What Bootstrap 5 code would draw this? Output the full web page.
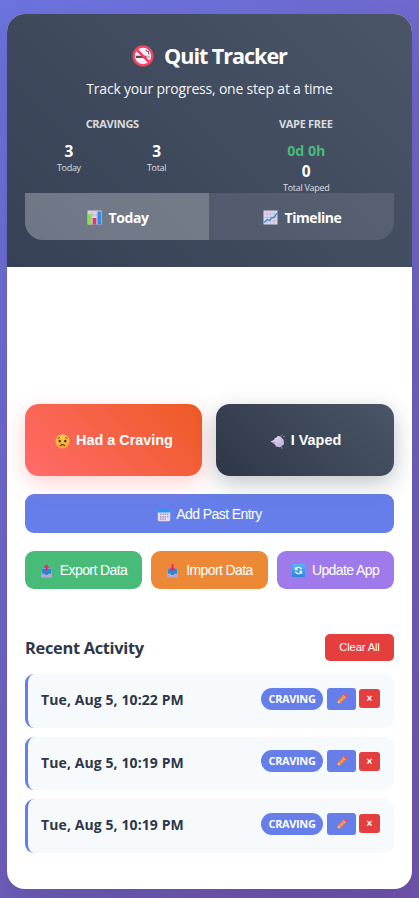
<!DOCTYPE html>
<html lang="en">
<head>
<meta charset="utf-8">
<meta name="viewport" content="width=device-width, initial-scale=1">
<title>Quit Tracker</title>
<link href="https://cdn.jsdelivr.net/npm/bootstrap@5.3.0/dist/css/bootstrap.min.css" rel="stylesheet">
<style>
body{font-family:"Open Sans","Noto Sans",sans-serif;background:linear-gradient(135deg,#6c73de 0%,#7053ac 100%);height:898px;padding:14px 7px 9px;overflow:hidden}
.app{height:875px;border-radius:18px;background:#fff;box-shadow:0 18px 36px rgba(0,0,0,.1)}
.hero{height:253px;padding:27px 18px;background:linear-gradient(45deg,#364155,#4a5568)}
.title{font-size:21.6px;line-height:29px;font-weight:700;letter-spacing:-1.05px;gap:10px;margin:0 0 9px}
.sub{font-size:14px;line-height:20px;letter-spacing:-.2px;margin:0 0 16px;opacity:.95}
.stats{height:78px;gap:18px}
.cap{font-size:11px;line-height:18px;font-weight:700;letter-spacing:-.3px;opacity:.8;margin:0 1px 8px 0}
.num{font-size:15.5px;line-height:20px;font-weight:700}
.free{font-size:14.2px;color:#48bb78}
.lab{font-size:9px;line-height:12px;letter-spacing:-.3px;opacity:.8;padding-top:1px}
.tabs{height:47px;border-radius:0 0 18px 18px;background:rgba(255,255,255,.1)}
.tab-item{gap:7px;font-size:14px;font-weight:700;letter-spacing:-.45px;color:#fff;border:0;background:none;padding:2px 0 0 1px;flex:1 0 0}
.tab-item.on{background:rgba(255,255,255,.2);flex:0 0 184px}
.main-area{padding:137px 18px 0}
.main-area button{font-family:"Liberation Sans",Arial,sans-serif;color:#fff;border:0;padding:0}
.main-area .big{height:72px;border-radius:14px;font-size:14.4px;font-weight:700;letter-spacing:0;gap:6px;padding:2px 0 0 1px}
.crave{flex:0 0 177px;background:linear-gradient(45deg,#ff6b6b,#ee5a24);box-shadow:0 7px 22px rgba(255,107,107,.3)}
.vape{flex:1 0 0;background:linear-gradient(45deg,#2d3748,#4a5568);box-shadow:0 7px 22px rgba(45,55,72,.3)}
.main-area .wide{height:39px;border-radius:9px;background:#667eea;font-size:14px;letter-spacing:-.58px;gap:5px;margin:18px 0;padding-top:2px}
.main-area .tool{height:38px;border-radius:9px;font-size:14px;letter-spacing:-.6px;gap:7px;padding-top:1px;flex:1 0 0}
.green{background:#48bb78}.orange{background:#ed8936}.purple{background:#9f7aea}
.recent{margin:45px 0 13px;height:27px}
.recent h2{font-size:16.4px;font-weight:700;color:#2d3748;margin:0;letter-spacing:-.3px}
.main-area .clear{width:69px;height:27px;border-radius:5px;background:#e53e3e;font-size:11.2px;letter-spacing:-.15px}
.entries{gap:9px}
.entry{height:53.6px;border-left:3px solid #667eea;border-radius:9px;background:#f7fafc;padding:0 14px 4px 13px}
.when{font-size:14px;font-weight:700;letter-spacing:.1px;color:#2d3748;padding-top:2px}
.tag{width:62px;height:22px;border-radius:11px;background:#667eea;color:#fff;font-size:10.9px;font-weight:700;letter-spacing:-.3px;margin-right:4px}
.main-area .edit{width:29px;height:22px;border-radius:3px;background:#667eea;margin-right:3px}
.main-area .del{width:21px;height:19px;border-radius:3px;background:#e53e3e;font-size:10px;font-weight:700;line-height:20px}
svg{flex:none;display:block}
</style>
</head>
<body>
<svg width="0" height="0" class="position-absolute">
<defs>
<linearGradient id="gy" x2="0" y2="1"><stop stop-color="#ffd23f"/><stop offset="1" stop-color="#f2a13a"/></linearGradient>
<linearGradient id="gb" x2="0" y2="1"><stop stop-color="#58b5f7"/><stop offset="1" stop-color="#2b86dc"/></linearGradient>
<linearGradient id="gc" x2="1" y2="1"><stop stop-color="#eee5f6"/><stop offset="1" stop-color="#b9a4da"/></linearGradient>
<symbol id="tray" viewBox="0 0 12 13"><path d="M2 3h8l1.500 6v3.200H.5V9z" fill="#c9badf"/><path d="M1.800 3.500h8.400l.7 5.300H8.200L7.300 10H4.700l-.9-1.200H1.100z" fill="#2389d8"/><path d="M.5 9h3l1 1.400h3L8.500 9h3v3.300H.5z" fill="#b6a4d2"/></symbol>
<symbol id="pen" viewBox="0 0 12 12"><path d="M2 7.300 7.300 2l2.700 2.700L4.700 10z" fill="#f98035"/><path d="m2.900 8.200 5.300-5.300.9.900-5.300 5.300z" fill="#ffa052"/><path d="m7.300 2 .9-.9q1-.9 2 0l.7.700q.9 1 0 2l-.9.900z" fill="#f34f62"/><path d="m6.700 2.600.6-.6L10 4.700l-.6.600z" fill="#c4b6c9"/><path d="M2 7.300.8 11.200 4.700 10z" fill="#e9b294"/><path d="m1.200 9.900-.4 1.300 1.300-.4z" fill="#40334e"/></symbol>
</defs>
</svg>
<main class="app overflow-hidden">
<header class="hero text-white text-center">
<h1 class="title d-flex justify-content-center align-items-center">
<svg width="22" height="22" viewBox="0 0 22 22"><circle cx="11" cy="11" r="9.300" fill="#f7effb"/><path d="M4 10.800h10.500V13H4z" fill="#59485e"/><path d="M14.500 10.800H18V13h-3.500z" fill="#d6b5bd"/><path d="M16.800 9.500V7.800q0-1.400-1.500-1.500-1.300-.1-1.300-1.500" fill="none" stroke="#5d5262" stroke-width="1.100"/><circle cx="11" cy="11" r="9.400" fill="none" stroke="#f44360" stroke-width="2.500"/><path d="m4.500 4.500 13 13" stroke="#f44360" stroke-width="2.500"/></svg>
<span>Quit Tracker</span></h1>
<p class="sub">Track your progress, one step at a time</p>
<section class="stats d-flex">
<div class="flex-fill w-50"><div class="cap">CRAVINGS</div><div class="d-flex"><div class="w-50"><div class="num">3</div><div class="lab">Today</div></div><div class="w-50"><div class="num">3</div><div class="lab">Total</div></div></div></div>
<div class="flex-fill w-50"><div class="cap">VAPE FREE</div><div class="num free">0d 0h</div><div class="num">0</div><div class="lab">Total Vaped</div></div>
</section>
<nav class="tabs d-flex overflow-hidden">
<button class="tab-item on d-flex justify-content-center align-items-center"><svg width="15" height="15" viewBox="0 0 15 15"><path d="M.5.5h14v14H.5z" fill="#dcd2e7"/><path d="M.5 5h14M.5 9.500h14M5 .5v14M10 .5v14" stroke="#bcafc9" stroke-width=".6"/><path d="M1 4h3.500v10.500H1z" fill="#8bdc58"/><path d="M5.700 8h3.600v6.500H5.700z" fill="#e43468"/><path d="M10.500 1.500H14v13h-3.500z" fill="#2e8de5"/></svg><span>Today</span></button>
<button class="tab-item d-flex justify-content-center align-items-center"><svg width="15" height="15" viewBox="0 0 15 15"><path d="M.5.5h14v14H.5z" fill="#dfd5e9"/><path d="M.5 4h14M.5 7.500h14M.5 11h14M4 .5v14M7.500 .5v14M11 .5v14" stroke="#bcb0cb" stroke-width=".6"/><path d="m1 12.500 3.500-3 2 1L9 7.500h2L14.300 3" fill="none" stroke="#2d91d3" stroke-width="1.300"/></svg><span>Timeline</span></button>
</nav>
</header>
<div class="main-area">
<div class="d-flex" style="gap:14px">
<button class="big crave d-flex justify-content-center align-items-center"><svg width="15" height="15" viewBox="0 0 15 15"><circle cx="7.500" cy="7.500" r="7" fill="url(#gy)"/><path d="M2.500 4.600 5 3.200m5 0 2.500 1.400" stroke="#79482d" fill="none"/><ellipse cx="4.700" cy="7.100" rx="1.200" ry="1.300" fill="#493446"/><ellipse cx="10.300" cy="7.100" rx="1.200" ry="1.300" fill="#493446"/><path d="M5 11.800q2.500-2.300 5 0" stroke="#6c3b37" stroke-width="1.100" fill="none"/></svg><span>Had a Craving</span></button>
<button class="big vape d-flex justify-content-center align-items-center"><svg width="15" height="15" viewBox="0 0 15 15"><path d="M.3 7.500 4 6q.2-2.300 2.500-2.600 1-2 3-1.200 2 .2 2.200 1.800 2.500 1 2.100 3.500 1 3-1.500 4-1.300 2.500-3.500 1.500-3 .4-3.600-2L3.500 9z" fill="url(#gc)"/><path d="m3 8 3-.6-2 2zM11.500 1.500l1-.8m1 2 1-.3M11.500 13.800l1 .3" stroke="#ddd0ec" stroke-width=".9"/></svg><span>I Vaped</span></button>
</div>
<button class="wide w-100 d-flex justify-content-center align-items-center"><svg width="14" height="14" viewBox="0 0 14 14"><rect x=".8" y="1" width="12.400" height="12.200" rx="1.500" fill="#e6dcf2"/><path d="M.5 4.500V2q0-1.300 1.300-1.300h10.400q1.300 0 1.300 1.300v2.500z" fill="#2799eb"/><path d="M3 6.300h8.500M3 8.700h8.500M3 11h6" stroke="#a896bf" stroke-width="1.500" stroke-dasharray="1.500 .8"/></svg><span>Add Past Entry</span></button>
<div class="d-flex" style="gap:9px">
<button class="tool green d-flex justify-content-center align-items-center"><svg width="13" height="14" viewBox="0 0 13 14"><use href="#tray" y="1" width="13" height="13"/><path d="M6.500.3 3.700 3.800h1.800v3h2v-3h1.800z" fill="#e8265e"/></svg><span>Export Data</span></button>
<button class="tool orange d-flex justify-content-center align-items-center"><svg width="13" height="14" viewBox="0 0 13 14"><use href="#tray" y="1" width="13" height="13"/><path d="M5.500.3h2v4h1.800L6.500 7.700 3.700 4.300h1.800z" fill="#e8265e"/></svg><span>Import Data</span></button>
<button class="tool purple d-flex justify-content-center align-items-center"><svg width="13" height="13" viewBox="0 0 13 13"><rect width="13" height="13" rx="1" fill="url(#gb)"/><path d="M9.600 5.200A3.400 3.400 0 0 0 4 4.500M3.400 7.800A3.400 3.400 0 0 0 9 8.500" fill="none" stroke="#fff" stroke-width="1.400"/><path d="M2.800 2.800v3.400h3.400zM10.200 10.200V6.800H6.800z" fill="#fff"/></svg><span>Update App</span></button>
</div>
<div class="recent d-flex justify-content-between align-items-center"><h2>Recent Activity</h2><button class="clear">Clear All</button></div>
<div class="entries d-flex flex-column">
<article class="entry d-flex align-items-center"><span class="when me-auto">Tue, Aug 5, 10:22 PM</span><span class="tag d-flex justify-content-center align-items-center">CRAVING</span><button class="edit d-flex justify-content-center align-items-center" aria-label="Edit"><svg width="12" height="12"><use href="#pen"/></svg></button><button class="del">×</button></article>
<article class="entry d-flex align-items-center"><span class="when me-auto">Tue, Aug 5, 10:19 PM</span><span class="tag d-flex justify-content-center align-items-center">CRAVING</span><button class="edit d-flex justify-content-center align-items-center" aria-label="Edit"><svg width="12" height="12"><use href="#pen"/></svg></button><button class="del">×</button></article>
<article class="entry d-flex align-items-center"><span class="when me-auto">Tue, Aug 5, 10:19 PM</span><span class="tag d-flex justify-content-center align-items-center">CRAVING</span><button class="edit d-flex justify-content-center align-items-center" aria-label="Edit"><svg width="12" height="12"><use href="#pen"/></svg></button><button class="del">×</button></article>
</div>
</div>
</main>
<script src="https://cdn.jsdelivr.net/npm/bootstrap@5.3.0/dist/js/bootstrap.bundle.min.js"></script>
</body>
</html>
